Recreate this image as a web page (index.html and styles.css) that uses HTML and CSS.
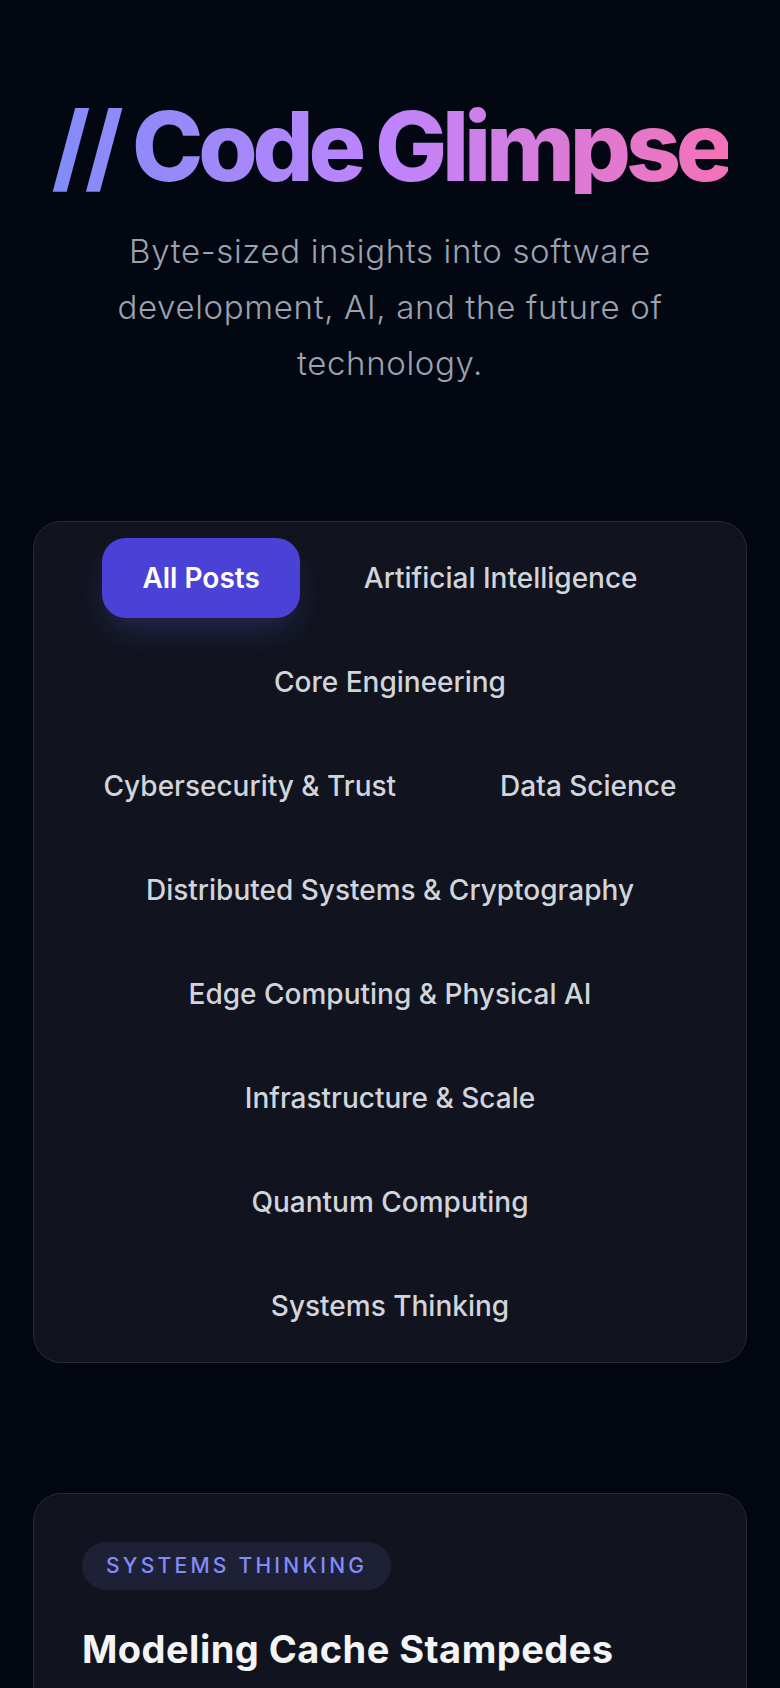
FILE: index.html
```html
<!DOCTYPE html>
<html lang="en">

<head>
    <meta charset="UTF-8">
    <meta name="viewport" content="width=device-width, initial-scale=1.0">
    <title>Code Glimpse</title>
    <link rel="stylesheet" href="styles.css">
</head>

<body>
    <div class="page">
        <header class="hero">
            <h1 class="logo">// Code Glimpse</h1>
            <p class="tagline">Byte-sized insights into software development, AI, and the future of technology.</p>
        </header>

        <nav class="filters">
            <button class="chip active">All Posts</button>
            <button class="chip">Artificial Intelligence</button>
            <button class="chip">Core Engineering</button>
            <button class="chip">Cybersecurity &amp; Trust</button>
            <button class="chip">Data Science</button>
            <button class="chip">Distributed Systems &amp; Cryptography</button>
            <button class="chip">Edge Computing &amp; Physical AI</button>
            <button class="chip">Infrastructure &amp; Scale</button>
            <button class="chip">Quantum Computing</button>
            <button class="chip">Systems Thinking</button>
        </nav>

        <article class="post">
            <span class="tag">Systems Thinking</span>
            <h2 class="post-title">Modeling Cache Stampedes</h2>
        </article>
    </div>
</body>

</html>
```

FILE: styles.css
```css
* {
    padding: 0;
    margin: 0;
    box-sizing: border-box;
}

body {
    background-color: #030712;
    font-family: Inter, "Noto Sans", sans-serif;
    color: #d1d5db;
    overflow: hidden;
}

.page {
    padding: 98px 33px 0;
}

.hero {
    text-align: center;
}

.logo {
    display: inline-block;
    font-size: 96px;
    line-height: 1;
    font-weight: 800;
    letter-spacing: -0.054em;
    word-spacing: -0.02em;
    background: linear-gradient(to right, #818cf8, #c084fc, #f472b6);
    -webkit-background-clip: text;
    background-clip: text;
    color: transparent;
}

.tagline {
    max-width: 590px;
    margin: 29px auto 0;
    font-size: 33px;
    line-height: 56px;
    font-weight: 300;
    letter-spacing: 0.02em;
    color: #9ca3af;
}

.filters {
    margin-top: 130px;
    padding: 16px;
    background-color: #11141e;
    border: 1px solid #272a35;
    border-radius: 28px;
    display: flex;
    flex-wrap: wrap;
    justify-content: center;
    gap: 24px;
}

.chip {
    border: none;
    background: none;
    font-family: inherit;
    font-size: 28px;
    font-weight: 500;
    line-height: 40px;
    padding: 20px 40px;
    border-radius: 24px;
    color: #d1d5db;
    cursor: pointer;
}

.chip.active {
    background-color: #4a42d6;
    color: #fff;
    font-weight: 600;
    box-shadow: 0 16px 32px -8px rgba(99, 102, 241, 0.28);
}

.post {
    margin-top: 130px;
    padding: 48px;
    background-color: #11141e;
    border: 1px solid #272a35;
    border-radius: 28px;
    min-height: 400px;
}

.tag {
    display: inline-block;
    padding: 12px 24px;
    line-height: 24px;
    font-size: 21px;
    font-weight: 500;
    letter-spacing: 0.155em;
    text-transform: uppercase;
    color: #818cf8;
    background-color: #1e2035;
    border-radius: 999px;
}

.post-title {
    margin-top: 36px;
    font-size: 38px;
    line-height: 46px;
    font-weight: 700;
    color: #f3f4f6;
    letter-spacing: 0.012em;
}
```
